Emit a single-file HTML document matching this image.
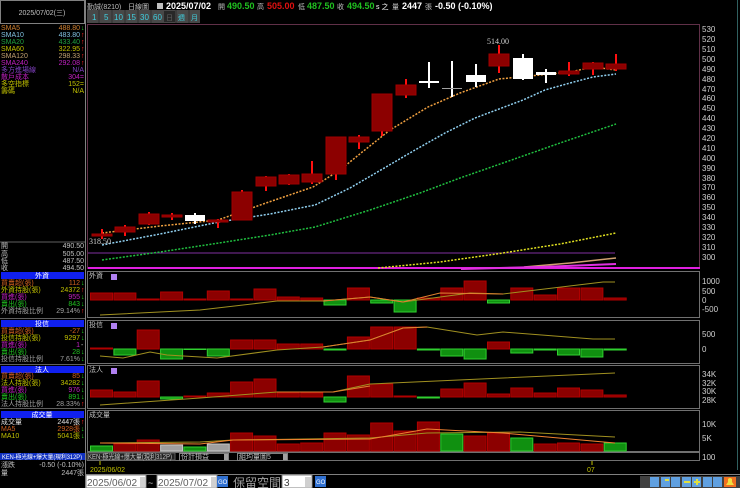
<!DOCTYPE html>
<html><head><meta charset="utf-8"><style>
html,body{margin:0;padding:0;background:#000;width:740px;height:488px;overflow:hidden}
svg{display:block}
text{font-family:"Liberation Sans","Noto Sans CJK TC",sans-serif}
.s{font-size:7px}
.ax{font-family:"Liberation Serif","Noto Sans CJK TC",serif;font-size:8px;fill:#d0d0d0}
.h{font-size:9px;font-weight:bold}
.r{fill:#8c0000;stroke:#b00000;stroke-width:1}
.g{fill:#109010;stroke:#30d030;stroke-width:1}
.w{fill:#a0a0a0;stroke:#c8c8c8;stroke-width:1}
</style></head><body>
<svg width="740" height="488" viewBox="0 0 740 488" xmlns="http://www.w3.org/2000/svg">
<rect width="740" height="488" fill="#000"/>
<rect x="0.5" y="0.5" width="84" height="23" fill="none" stroke="#808080"/>
<text x="42" y="15" class="s" fill="#c0c0c0" text-anchor="middle">2025/07/02(三)</text>
<line x1="85.5" y1="0" x2="85.5" y2="488" stroke="#808080"/>
<line x1="0" y1="242" x2="85" y2="242" stroke="#606060"/>
<line x1="737.5" y1="0" x2="737.5" y2="470" stroke="#306060"/>
<g class="s">
<text x="1" y="30" fill="#d08030">SMA5</text><text x="80" y="30" fill="#d08030" text-anchor="end">488.80</text><text x="81" y="30" fill="#20d020">↓</text>
<text x="1" y="37" fill="#80c0e0">SMA10</text><text x="80" y="37" fill="#80c0e0" text-anchor="end">483.80</text><text x="81" y="37" fill="#ff2020">↑</text>
<text x="1" y="44" fill="#20a040">SMA20</text><text x="80" y="44" fill="#20a040" text-anchor="end">433.40</text><text x="81" y="44" fill="#ff2020">↑</text>
<text x="1" y="51" fill="#c0c000">SMA60</text><text x="80" y="51" fill="#c0c000" text-anchor="end">322.95</text><text x="81" y="51" fill="#ff2020">↑</text>
<text x="1" y="58" fill="#c0a070">SMA120</text><text x="80" y="58" fill="#c0a070" text-anchor="end">298.33</text><text x="81" y="58" fill="#ff2020">↑</text>
<text x="1" y="65" fill="#c020c0">SMA240</text><text x="80" y="65" fill="#c020c0" text-anchor="end">292.08</text><text x="81" y="65" fill="#ff2020">↑</text>
<text x="1" y="72" fill="#8040c0">多方進場線</text><text x="84" y="72" fill="#8040c0" text-anchor="end">N/A</text>
<text x="1" y="79" fill="#c020c0">散戶成本</text><text x="84" y="79" fill="#c020c0" text-anchor="end">304=</text>
<text x="1" y="86" fill="#c0c000">多空指標</text><text x="84" y="86" fill="#c0c000" text-anchor="end">152=</text>
<text x="1" y="93" fill="#c0c000">籌碼</text><text x="84" y="93" fill="#c0c000" text-anchor="end">N/A</text>
<text x="1" y="248" fill="#c0c0c0">開</text><text x="84" y="248" fill="#c0c0c0" text-anchor="end">490.50</text>
<text x="1" y="256" fill="#c0c0c0">高</text><text x="84" y="256" fill="#c0c0c0" text-anchor="end">505.00</text>
<text x="1" y="263" fill="#c0c0c0">低</text><text x="84" y="263" fill="#c0c0c0" text-anchor="end">487.50</text>
<text x="1" y="270" fill="#c0c0c0">收</text><text x="84" y="270" fill="#c0c0c0" text-anchor="end">494.50</text>
</g>
<g class="s">
<rect x="1" y="272" width="83" height="7" fill="#1020f0"/><text x="42" y="278" fill="#fff" text-anchor="middle">外資</text>
<text x="1" y="285" fill="#d06020">買賣超(張)</text><text x="80" y="285" fill="#d06020" text-anchor="end">112</text><text x="81" y="285" fill="#20d020">↓</text>
<text x="1" y="292" fill="#c0c000">外資持股(張)</text><text x="80" y="292" fill="#c0c000" text-anchor="end">24372</text><text x="81" y="292" fill="#ff2020">↑</text>
<text x="1" y="299" fill="#c020c0">買進(張)</text><text x="80" y="299" fill="#c020c0" text-anchor="end">955</text><text x="81" y="299" fill="#20d020">↓</text>
<text x="1" y="306" fill="#20c020">賣出(張)</text><text x="80" y="306" fill="#20c020" text-anchor="end">843</text><text x="81" y="306" fill="#20d020">↓</text>
<text x="1" y="313" fill="#a0a0a0">外資持股比例</text><text x="80" y="313" fill="#a0a0a0" text-anchor="end">29.14%</text><text x="81" y="313" fill="#ff2020">↑</text>
<line x1="0" y1="318.5" x2="85" y2="318.5" stroke="#606060"/>
<rect x="1" y="320" width="83" height="7" fill="#1020f0"/><text x="42" y="326" fill="#fff" text-anchor="middle">投信</text>
<text x="1" y="333" fill="#d06020">買賣超(張)</text><text x="80" y="333" fill="#d06020" text-anchor="end">-27</text><text x="81" y="333" fill="#20d020">↓</text>
<text x="1" y="340" fill="#c0c000">投信持股(張)</text><text x="80" y="340" fill="#c0c000" text-anchor="end">9297</text><text x="81" y="340" fill="#20d020">↓</text>
<text x="1" y="347" fill="#c020c0">買進(張)</text><text x="80" y="347" fill="#c020c0" text-anchor="end">1</text><text x="81" y="347" fill="#c0c0c0">-</text>
<text x="1" y="354" fill="#20c020">賣出(張)</text><text x="80" y="354" fill="#20c020" text-anchor="end">28</text><text x="81" y="354" fill="#20d020">↓</text>
<text x="1" y="361" fill="#a0a0a0">投信持股比例</text><text x="80" y="361" fill="#a0a0a0" text-anchor="end">7.61%</text><text x="81" y="361" fill="#20d020">↓</text>
<line x1="0" y1="364.5" x2="85" y2="364.5" stroke="#606060"/>
<rect x="1" y="366" width="83" height="7" fill="#1020f0"/><text x="42" y="372" fill="#fff" text-anchor="middle">法人</text>
<text x="1" y="378" fill="#d06020">買賣超(張)</text><text x="80" y="378" fill="#d06020" text-anchor="end">85</text><text x="81" y="378" fill="#20d020">↓</text>
<text x="1" y="385" fill="#c0c000">法人持股(張)</text><text x="80" y="385" fill="#c0c000" text-anchor="end">34282</text><text x="81" y="385" fill="#20d020">↓</text>
<text x="1" y="392" fill="#c020c0">買進(張)</text><text x="80" y="392" fill="#c020c0" text-anchor="end">976</text><text x="81" y="392" fill="#20d020">↓</text>
<text x="1" y="399" fill="#20c020">賣出(張)</text><text x="80" y="399" fill="#20c020" text-anchor="end">891</text><text x="81" y="399" fill="#20d020">↓</text>
<text x="1" y="406" fill="#a0a0a0">法人持股比例</text><text x="80" y="406" fill="#a0a0a0" text-anchor="end">28.33%</text><text x="81" y="406" fill="#ff2020">↑</text>
<line x1="0" y1="408.5" x2="85" y2="408.5" stroke="#606060"/>
<rect x="1" y="411" width="83" height="7" fill="#1020f0"/><text x="42" y="417" fill="#fff" text-anchor="middle">成交量</text>
<text x="1" y="424" fill="#e0e0e0">成交量</text><text x="80" y="424" fill="#e0e0e0" text-anchor="end">2447張</text><text x="81" y="424" fill="#ff2020">↑</text>
<text x="1" y="431" fill="#d06020">MA5</text><text x="80" y="431" fill="#d06020" text-anchor="end">2928張</text><text x="81" y="431" fill="#20d020">↓</text>
<text x="1" y="438" fill="#c0c000">MA10</text><text x="80" y="438" fill="#c0c000" text-anchor="end">5041張</text><text x="81" y="438" fill="#20d020">↓</text>
<rect x="0" y="453" width="85" height="7" fill="#1030c0"/><text x="2" y="459" fill="#fff" font-size="6" textLength="80" lengthAdjust="spacingAndGlyphs">KEN-極光線+爆大量(現利312P)</text>
<text x="1" y="467" fill="#c0c0c0">漲跌</text><text x="84" y="467" fill="#c0c0c0" text-anchor="end">-0.50 (-0.10%)</text>
<text x="1" y="475" fill="#c0c0c0">量</text><text x="84" y="475" fill="#c0c0c0" text-anchor="end">2447張</text>
</g>
<g>
<text x="87" y="9" class="s" fill="#c0c0c0" font-size="8">勤誠(8210)</text>
<text x="128" y="9" class="s" fill="#c0c0c0">日線圖</text>
<rect x="157" y="3" width="6" height="6" fill="#c0c0c0"/>
<text x="166" y="9" class="h" fill="#fff">2025/07/02</text>
<text x="218" y="9" class="s" fill="#c0c0c0">開</text><text x="227" y="9" class="h" fill="#20c020">490.50</text>
<text x="257" y="9" class="s" fill="#c0c0c0">高</text><text x="267" y="9" class="h" fill="#e01010">505.00</text>
<text x="298" y="9" class="s" fill="#c0c0c0">低</text><text x="307" y="9" class="h" fill="#20c020">487.50</text>
<text x="337" y="9" class="s" fill="#c0c0c0">收</text><text x="347" y="9" class="h" fill="#20c020">494.50</text>
<text x="376" y="9" class="s" fill="#fff">s 之</text>
<text x="392" y="9" class="s" fill="#c0c0c0">量</text><text x="402" y="9" class="h" fill="#fff">2447</text>
<text x="425" y="9" class="s" fill="#c0c0c0">張</text>
<text x="435" y="9" class="h" fill="#fff">-0.50 (-0.10%)</text>
</g>
<g class="s">
<rect x="87" y="10" width="113" height="13" fill="#484848"/>
<g fill="#40d0e0" font-size="8">
<text x="92" y="20">1</text><text x="104" y="20">5</text><text x="114" y="20">10</text><text x="127" y="20">15</text><text x="140" y="20">30</text><text x="153" y="20">60</text>
</g>
<rect x="164" y="11" width="11" height="11" fill="#282828"/><text x="166" y="20" fill="#606060">日</text>
<text x="178" y="20" fill="#40d0e0">週</text><text x="191" y="20" fill="#40d0e0">月</text>
<g stroke="#303030"><line x1="99" y1="10" x2="99" y2="23"/><line x1="112" y1="10" x2="112" y2="23"/><line x1="125" y1="10" x2="125" y2="23"/><line x1="138" y1="10" x2="138" y2="23"/><line x1="151" y1="10" x2="151" y2="23"/><line x1="176" y1="10" x2="176" y2="23"/><line x1="189" y1="10" x2="189" y2="23"/></g>
</g>
<rect x="87.5" y="24.5" width="612" height="244" fill="none" stroke="#603048"/>
<g class="ax">
<text x="702" y="32">530</text><text x="702" y="42">520</text><text x="702" y="52">510</text><text x="702" y="62">500</text><text x="702" y="72">490</text><text x="702" y="82">480</text><text x="702" y="92">470</text><text x="702" y="101">460</text><text x="702" y="111">450</text><text x="702" y="121">440</text><text x="702" y="131">430</text><text x="702" y="141">420</text><text x="702" y="151">410</text><text x="702" y="161">400</text><text x="702" y="171">390</text><text x="702" y="181">380</text><text x="702" y="190">370</text><text x="702" y="200">360</text><text x="702" y="210">350</text><text x="702" y="220">340</text><text x="702" y="230">330</text><text x="702" y="240">320</text><text x="702" y="250">310</text><text x="702" y="260">300</text>
</g>
<line x1="88" y1="253" x2="615" y2="253" stroke="#8030a0" stroke-width="1"/>
<line x1="88" y1="268" x2="700" y2="268" stroke="#e020e0" stroke-width="2"/>
<polyline points="378,268 440,262 503,253 560,244 616,233" fill="none" stroke="#e0e020" stroke-width="1.5" stroke-dasharray="2,1.5"/>
<polyline points="524,267 570,263 616,258" fill="none" stroke="#d0a070" stroke-width="1.5"/>
<polyline points="461,269 540,267 616,264" fill="none" stroke="#e030e0" stroke-width="2"/>
<polyline points="102,260 160,252 219,243 270,235 315,227 370,210 420,193 460,178 503,163 560,143 616,124" fill="none" stroke="#20c040" stroke-width="1.5" stroke-dasharray="2,1.5"/>
<polyline points="102,245 160,234 219,222 270,214 315,205 350,188 386,167 415,150 445,133 475,118 499,109 523,100 545,90 570,83 593,77 616,74" fill="none" stroke="#90d0f0" stroke-width="1.5" stroke-dasharray="2,1.5"/>
<polyline points="102,233 160,226 218,220 266,203 313,187 340,170 361,153 390,130 428,107 460,93 499,79 540,75 570,72 593,67 616,70" fill="none" stroke="#f0a040" stroke-width="1.5" stroke-dasharray="2,1.5"/>
<g stroke="#ff1010" stroke-width="2">
<line x1="102" y1="229" x2="102" y2="239"/><line x1="125" y1="225" x2="125" y2="236"/><line x1="149" y1="212" x2="149" y2="225"/><line x1="172" y1="213" x2="172" y2="220"/><line x1="218" y1="219" x2="218" y2="228"/><line x1="242" y1="190" x2="242" y2="220"/><line x1="266" y1="176" x2="266" y2="191"/><line x1="289" y1="174" x2="289" y2="185"/><line x1="312" y1="161" x2="312" y2="184"/><line x1="336" y1="137" x2="336" y2="180"/><line x1="359" y1="135" x2="359" y2="149"/><line x1="382" y1="94" x2="382" y2="136"/><line x1="406" y1="79" x2="406" y2="98"/><line x1="499" y1="45" x2="499" y2="73"/><line x1="569" y1="62" x2="569" y2="76"/><line x1="593" y1="62" x2="593" y2="75"/><line x1="616" y1="54" x2="616" y2="71"/>
</g>
<g fill="#8c0000" stroke="#a00000">
<rect x="92" y="234" width="20" height="2"/><rect x="115" y="227" width="20" height="5"/><rect x="139" y="214" width="20" height="10"/><rect x="162" y="215" width="20" height="2"/><rect x="208" y="220" width="20" height="2"/><rect x="232" y="192" width="20" height="28"/><rect x="256" y="177" width="20" height="9"/><rect x="279" y="175" width="20" height="9"/><rect x="302" y="174" width="20" height="8"/><rect x="326" y="137" width="20" height="37"/><rect x="349" y="137" width="20" height="5"/><rect x="372" y="94" width="20" height="37"/><rect x="396" y="85" width="20" height="10"/><rect x="489" y="54" width="20" height="12"/><rect x="559" y="71" width="20" height="3"/><rect x="583" y="63" width="20" height="6"/><rect x="606" y="64" width="20" height="5"/>
</g>
<g stroke="#fff" stroke-width="2">
<line x1="195" y1="213" x2="195" y2="224"/><line x1="429" y1="62" x2="429" y2="88"/><line x1="452" y1="61" x2="452" y2="97"/><line x1="476" y1="64" x2="476" y2="87"/><line x1="523" y1="54" x2="523" y2="80"/><line x1="546" y1="69" x2="546" y2="83"/>
</g>
<g fill="#fff">
<rect x="185" y="215" width="20" height="6"/><rect x="419" y="81" width="20" height="2"/><rect x="466" y="75" width="20" height="7"/><rect x="513" y="58" width="20" height="21"/><rect x="536" y="72" width="20" height="3"/>
</g>
<line x1="442" y1="88.5" x2="462" y2="88.5" stroke="#a0a0a0"/>
<text x="487" y="44" class="ax" fill="#e0e0e0">514.00</text>
<text x="89" y="244" class="ax" fill="#e0e0e0">318.50</text>
<g fill="none" stroke="#707070">
<rect x="87.5" y="271.5" width="612" height="46"/>
<rect x="87.5" y="320.5" width="612" height="43"/>
<rect x="87.5" y="365.5" width="612" height="43"/>
<rect x="87.5" y="410.5" width="612" height="41"/>
<rect x="87.5" y="452.5" width="612" height="8"/>
</g>
<g class="s" fill="#c0c0c0">
<text x="89" y="278">外資</text><text x="89" y="327">投信</text><text x="89" y="372">法人</text><text x="89" y="417">成交量</text>
</g>
<g fill="#b080f0"><rect x="111" y="274" width="6" height="6"/><rect x="111" y="323" width="6" height="6"/><rect x="111" y="368" width="6" height="6"/></g>
<g class="ax">
<text x="702" y="284">1000</text><text x="702" y="294">500</text><text x="702" y="303">0</text><text x="702" y="312">-500</text>
<text x="702" y="337">500</text><text x="702" y="352">0</text>
<text x="702" y="377">34K</text><text x="702" y="386">32K</text><text x="702" y="394">30K</text><text x="702" y="403">28K</text>
<text x="702" y="427">10K</text><text x="702" y="441">5K</text><text x="702" y="460">100</text>
</g>
<g>
<rect class="r" x="90.5" y="293" width="22" height="7"/><rect class="r" x="113.9" y="293" width="22" height="7"/><rect class="r" x="137.2" y="299" width="22" height="1"/><rect class="r" x="160.6" y="292" width="22" height="8"/><rect class="r" x="183.9" y="299" width="22" height="1"/><rect class="r" x="207.3" y="291" width="22" height="9"/><rect class="r" x="230.6" y="299" width="22" height="1"/><rect class="r" x="254" y="289" width="22" height="11"/><rect class="r" x="277.3" y="297" width="22" height="3"/><rect class="r" x="300.7" y="298" width="22" height="2"/><rect class="g" x="324" y="300" width="22" height="5"/><rect class="r" x="347.4" y="288" width="22" height="12"/><rect class="g" x="370.7" y="300" width="22" height="3"/><rect class="g" x="394.1" y="300" width="22" height="12"/><rect class="r" x="417.4" y="298" width="22" height="2"/><rect class="r" x="440.8" y="288" width="22" height="12"/><rect class="r" x="464.1" y="281" width="22" height="19"/><rect class="g" x="487.5" y="300" width="22" height="3"/><rect class="r" x="510.8" y="288" width="22" height="12"/><rect class="r" x="534.2" y="295" width="22" height="5"/><rect class="r" x="557.5" y="288" width="22" height="12"/><rect class="r" x="580.9" y="288" width="22" height="12"/><rect class="r" x="604.2" y="298" width="22" height="2"/>
</g>
<polyline points="100,315 200,310 277,301 323,301 370,297 403,302 470,293 503,294 603,282 615,282" fill="none" stroke="#a09020" stroke-width="1"/>
<polyline points="323,301 370,297 403,302 440,293 503,294" fill="none" stroke="#e08030" stroke-width="1"/>
<g>
<rect class="r" x="90.5" y="348" width="22" height="1"/><rect class="g" x="113.9" y="349" width="22" height="6"/><rect class="r" x="137.2" y="330" width="22" height="19"/><rect class="g" x="160.6" y="349" width="22" height="10"/><rect class="g" x="183.9" y="349" width="22" height="0.5"/><rect class="g" x="207.3" y="349" width="22" height="7"/><rect class="r" x="230.6" y="340" width="22" height="9"/><rect class="r" x="254" y="340" width="22" height="9"/><rect class="r" x="277.3" y="344" width="22" height="5"/><rect class="r" x="300.7" y="344" width="22" height="5"/><rect class="g" x="324" y="349" width="22" height="1"/><rect class="r" x="347.4" y="337" width="22" height="12"/><rect class="r" x="370.7" y="327" width="22" height="22"/><rect class="r" x="394.1" y="327" width="22" height="22"/><rect class="g" x="417.4" y="349" width="22" height="1"/><rect class="g" x="440.8" y="349" width="22" height="7"/><rect class="g" x="464.1" y="349" width="22" height="10"/><rect class="r" x="487.5" y="342" width="22" height="7"/><rect class="g" x="510.8" y="349" width="22" height="4"/><rect class="g" x="534.2" y="349" width="22" height="1"/><rect class="g" x="557.5" y="349" width="22" height="6"/><rect class="g" x="580.9" y="349" width="22" height="8"/><rect class="g" x="604.2" y="349" width="22" height="1"/>
</g>
<polyline points="100,356 123,358 150,352 167,355 217,358 277,350 323,347 370,340 403,328 427,327 477,335 503,332 593,339 615,339" fill="none" stroke="#a09020" stroke-width="1"/>
<polyline points="323,347 370,340 403,328 427,327" fill="none" stroke="#e08030" stroke-width="1"/>
<g>
<rect class="r" x="90.5" y="390" width="22" height="7"/><rect class="r" x="113.9" y="392" width="22" height="5"/><rect class="r" x="137.2" y="381" width="22" height="16"/><rect class="g" x="160.6" y="397" width="22" height="2"/><rect class="r" x="183.9" y="396" width="22" height="1"/><rect class="r" x="207.3" y="393" width="22" height="4"/><rect class="r" x="230.6" y="382" width="22" height="15"/><rect class="r" x="254" y="379" width="22" height="18"/><rect class="r" x="277.3" y="393" width="22" height="4"/><rect class="r" x="300.7" y="393" width="22" height="4"/><rect class="g" x="324" y="397" width="22" height="5"/><rect class="r" x="347.4" y="376" width="22" height="21"/><rect class="r" x="370.7" y="384" width="22" height="13"/><rect class="r" x="394.1" y="396" width="22" height="1"/><rect class="g" x="417.4" y="397" width="22" height="1"/><rect class="r" x="440.8" y="389" width="22" height="8"/><rect class="r" x="464.1" y="383" width="22" height="14"/><rect class="r" x="487.5" y="394" width="22" height="3"/><rect class="r" x="510.8" y="388" width="22" height="9"/><rect class="r" x="534.2" y="393" width="22" height="4"/><rect class="r" x="557.5" y="388" width="22" height="9"/><rect class="r" x="580.9" y="390" width="22" height="7"/><rect class="r" x="604.2" y="395" width="22" height="2"/>
</g>
<polyline points="100,405 200,398 277,392 333,392 370,384 503,378 615,373" fill="none" stroke="#a09020" stroke-width="1"/>
<polyline points="277,392 333,392 370,386" fill="none" stroke="#e08030" stroke-width="1"/>
<g>
<rect class="g" x="90.5" y="446" width="22" height="5"/><rect class="r" x="113.9" y="444" width="22" height="7"/><rect class="r" x="137.2" y="440" width="22" height="11"/><rect class="w" x="160.6" y="445" width="22" height="6"/><rect class="g" x="183.9" y="447" width="22" height="4"/><rect class="w" x="207.3" y="444" width="22" height="7"/><rect class="r" x="230.6" y="433" width="22" height="18"/><rect class="r" x="254" y="436" width="22" height="15"/><rect class="r" x="277.3" y="444" width="22" height="7"/><rect class="r" x="300.7" y="443" width="22" height="8"/><rect class="r" x="324" y="433" width="22" height="18"/><rect class="r" x="347.4" y="435" width="22" height="16"/><rect class="r" x="370.7" y="423" width="22" height="28"/><rect class="r" x="394.1" y="431" width="22" height="20"/><rect class="r" x="417.4" y="422" width="22" height="29"/><rect class="g" x="440.8" y="434" width="22" height="17"/><rect class="r" x="464.1" y="436" width="22" height="15"/><rect class="r" x="487.5" y="433" width="22" height="18"/><rect class="g" x="510.8" y="438" width="22" height="13"/><rect class="r" x="534.2" y="444" width="22" height="7"/><rect class="r" x="557.5" y="443" width="22" height="8"/><rect class="r" x="580.9" y="444" width="22" height="7"/><rect class="g" x="604.2" y="443" width="22" height="8"/>
</g>
<polyline points="100,443 200,442 233,440 370,438 427,433 520,432 615,437" fill="none" stroke="#a09020" stroke-width="1"/>
<polyline points="100,443 200,444 233,440 370,439 427,429 503,433 615,443" fill="none" stroke="#f08030" stroke-width="1"/>
<rect x="87" y="453" width="88" height="7" fill="#202020" stroke="#606060"/>
<text x="88" y="459" class="s" fill="#c0c0c0" font-size="6" textLength="84" lengthAdjust="spacingAndGlyphs">KEN-極光線+爆大量(現利312P)</text>
<rect x="179.5" y="453.5" width="49" height="7" fill="#000" stroke="#808080"/><text x="181" y="459" class="s" fill="#c0c0c0" font-size="6">份計損益</text><rect x="224" y="454" width="4" height="6" fill="#a0a0a0"/>
<rect x="237.5" y="453.5" width="50" height="7" fill="#000" stroke="#808080"/><text x="239" y="459" class="s" fill="#c0c0c0" font-size="6">組均量圖5</text><rect x="283" y="454" width="4" height="6" fill="#a0a0a0"/>
<line x1="100" y1="461" x2="100" y2="465" stroke="#c0c000"/><line x1="592" y1="461" x2="592" y2="465" stroke="#c0c000"/>
<text x="90" y="472" class="s" fill="#c0c000" font-size="8">2025/06/02</text>
<text x="587" y="472" class="s" fill="#c0c000" font-size="8">07</text>
<line x1="86" y1="474.5" x2="740" y2="474.5" stroke="#808080"/>
<rect x="86" y="475" width="60" height="13" fill="#fff" stroke="#808080"/><text x="87" y="486" font-size="10" fill="#606060" font-family="Liberation Serif">2025/06/02</text><rect x="140" y="477" width="5" height="10" fill="#d0d0d0"/>
<text x="148" y="486" font-size="9" fill="#c0c0c0">~</text>
<rect x="157" y="475" width="60" height="13" fill="#fff" stroke="#808080"/><text x="158" y="486" font-size="10" fill="#606060" font-family="Liberation Serif">2025/07/02</text><rect x="211" y="477" width="5" height="10" fill="#d0d0d0"/>
<rect x="217" y="476" width="11" height="11" fill="#3070d0"/><text x="218" y="484" font-size="6" fill="#fff">GO</text>
<text x="233" y="487" font-size="12" fill="#a0a0a0">保留空間</text>
<rect x="282" y="475" width="30" height="13" fill="#fff" stroke="#808080"/><text x="284" y="486" font-size="10" fill="#404040">3</text><rect x="305" y="477" width="6" height="10" fill="#d0d0d0"/>
<rect x="315" y="476" width="11" height="11" fill="#3070d0"/><text x="316" y="484" font-size="6" fill="#fff">GO</text>
<rect x="640" y="476" width="100" height="12" fill="#404040"/>
<g fill="#60a0e0"><rect x="650" y="477" width="9" height="10"/><rect x="661" y="477" width="9" height="10"/><rect x="671" y="477" width="9" height="10"/><rect x="682" y="477" width="9" height="10"/><rect x="692" y="477" width="9" height="10"/><rect x="703" y="477" width="9" height="10"/><rect x="713" y="477" width="9" height="10"/></g>
<rect x="665" y="479" width="4" height="2" fill="#e0e040"/><rect x="684" y="481" width="6" height="2" fill="#e0e040"/><rect x="694" y="481" width="6" height="2" fill="#e0e040"/><rect x="696" y="479" width="2" height="6" fill="#e0e040"/>
<rect x="724" y="477" width="12" height="10" fill="#f07020"/><path d="M726 485 L734 485 L732 482 L732 479 Q730 477 728 479 L728 482 Z" fill="#f0e040"/>
</svg>
</body></html>
